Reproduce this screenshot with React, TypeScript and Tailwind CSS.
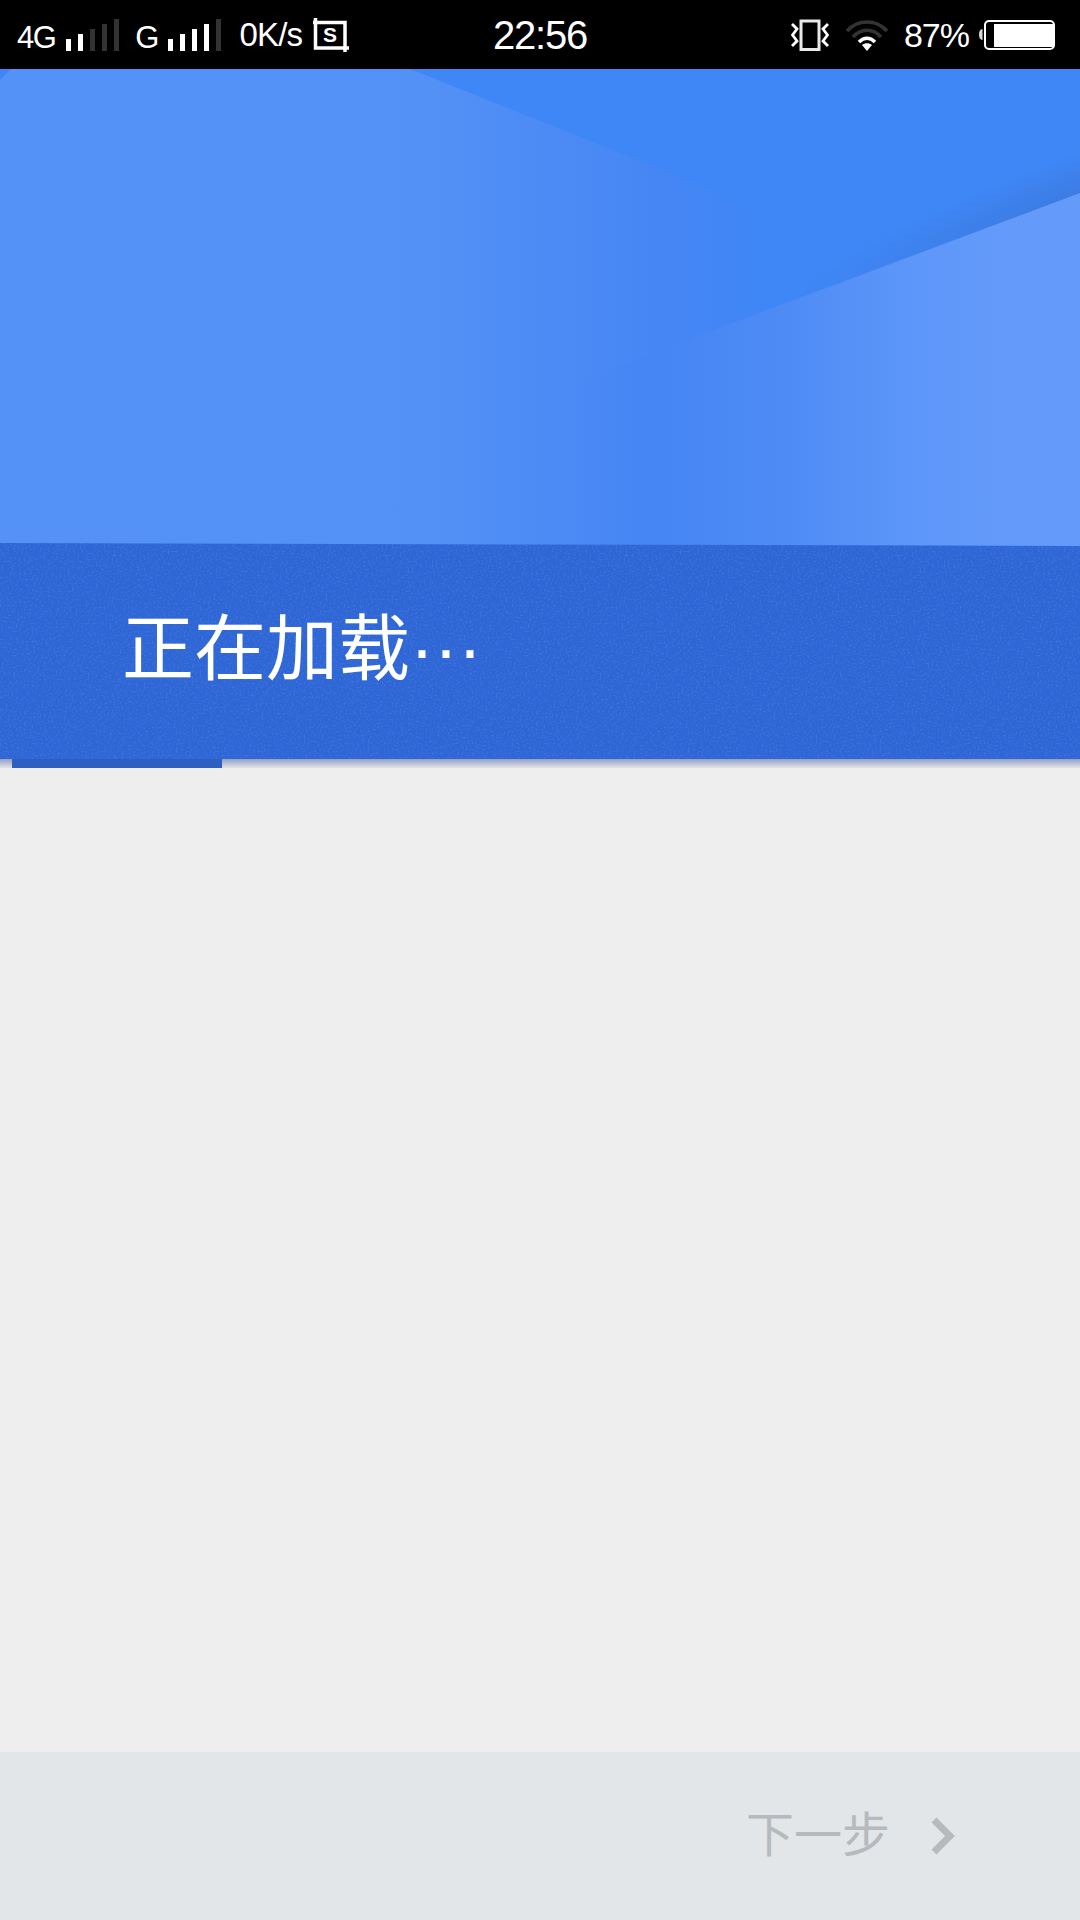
import React from 'react';

function Signal({ on }: { on: number }) {
  const bars = [12, 17, 22, 27, 32];
  return (
    <svg width="53" height="32" viewBox="0 0 53 32">
      {bars.map((h, i) => (
        <rect key={i} x={i * 12} y={32 - h} width="5" height={h} fill={i < on ? '#ffffff' : '#333333'} />
      ))}
    </svg>
  );
}

function ScreenshotIcon() {
  return (
    <svg width="39" height="34" viewBox="0 0 39 34">
      <path d="M3 4.500H35V34" fill="none" stroke="#fff" strokeWidth="3.500" />
      <path d="M5.500 0V30H39" fill="none" stroke="#fff" strokeWidth="3.500" />
      <text x="20" y="24" textAnchor="middle" fontSize="21" fontWeight="700" fill="#fff" fontFamily="Liberation Sans">S</text>
    </svg>
  );
}

function VibrateIcon() {
  return (
    <svg width="38" height="32" viewBox="0 0 38 32">
      <rect x="10" y="2" width="18" height="28.500" fill="none" stroke="#e8e8e8" strokeWidth="3" />
      <path d="M1 5l5 5-4.500 6 4.500 6-5 5" fill="none" stroke="#fff" strokeWidth="2.800" />
      <path d="M37 5l-5 5 4.500 6-4.500 6 5 5" fill="none" stroke="#fff" strokeWidth="2.800" />
    </svg>
  );
}

function WifiIcon() {
  return (
    <svg width="44" height="32" viewBox="0 0 44 32">
      <path d="M2 12C13 0 31 0 42 12" fill="none" stroke="#333" strokeWidth="3.500" />
      <path d="M8 18C16 9 28 9 36 18" fill="none" stroke="#333" strokeWidth="3.500" />
      <path d="M14 23C19 18 25 18 30 23" fill="none" stroke="#fff" strokeWidth="3.500" />
      <path d="M17 26C20 23.500 24 23.500 27 26L22 32Z" fill="#fff" />
    </svg>
  );
}

function BatteryIcon() {
  return (
    <svg width="76" height="30" viewBox="0 0 76 30">
      <path d="M3.500 9C1 9.500 0 11 0 14.500S1 19.500 3.500 20Z" fill="#d8d8d8" />
      <rect x="6" y="1" width="69" height="28" rx="4" fill="none" stroke="#fff" strokeWidth="2" />
      <rect x="15" y="4" width="59" height="23" fill="#fff" />
    </svg>
  );
}

function BannerArt() {
  return (
    <svg className="absolute inset-0 h-full w-full" viewBox="0 0 1080 477" preserveAspectRatio="none">
      <defs>
        <linearGradient id="leftFace" gradientUnits="userSpaceOnUse" x1="0" y1="0" x2="770" y2="0">
          <stop offset="0" stopColor="#5492f7" />
          <stop offset="0.55" stopColor="#5391f6" />
          <stop offset="0.86" stopColor="#4686f4" />
          <stop offset="1" stopColor="#3f86f6" />
        </linearGradient>
        <linearGradient id="rightFace" gradientUnits="userSpaceOnUse" x1="570" y1="0" x2="1000" y2="0">
          <stop offset="0" stopColor="#4686f4" stopOpacity="0" />
          <stop offset="0.22" stopColor="#4686f4" />
          <stop offset="0.5" stopColor="#4e8bf5" />
          <stop offset="0.78" stopColor="#5c96f9" />
          <stop offset="1" stopColor="#649bfa" />
        </linearGradient>
        <radialGradient id="edgeShade" gradientUnits="userSpaceOnUse" cx="0" cy="0" r="1" gradientTransform="translate(1080 128) rotate(-20.500) scale(300 42)">
          <stop offset="0" stopColor="#3a72d0" stopOpacity="0.55" />
          <stop offset="1" stopColor="#3a72d0" stopOpacity="0" />
        </radialGradient>
      </defs>
      <rect width="1080" height="477" fill="#3f86f6" />
      <polygon points="0,11 11,0 410,0 770,144 770,477 0,477" fill="url(#leftFace)" />
      <rect width="1080" height="477" fill="url(#edgeShade)" />
      <polygon points="1080,124 570,315 570,477 1080,477" fill="url(#rightFace)" />
    </svg>
  );
}

export default function App() {
  return (
    <div className="flex h-[1920px] w-[1080px] flex-col overflow-hidden bg-[#eeeeee] font-['Liberation_Sans','Noto_Sans_CJK_SC',sans-serif]">
      {/* status bar */}
      <div className="grid h-[69px] grid-cols-3 items-center bg-black text-white">
        <div className="flex items-center pl-[17px]">
          <span className="mt-[6px] text-[31px] leading-none tracking-[-1.5px]">4G</span>
          <span className="ml-[11px] flex"><Signal on={2} /></span>
          <span className="ml-4 mt-[6px] text-[31px] leading-none">G</span>
          <span className="ml-[9px] flex"><Signal on={4} /></span>
          <span className="ml-[18px] text-[33px] leading-none tracking-[-0.8px]">0K/s</span>
          <span className="ml-[8px] flex"><ScreenshotIcon /></span>
        </div>
        <div className="text-center text-[40px] leading-none tracking-[-1.2px]">22:56</div>
        <div className="flex items-center justify-end pr-[25px]">
          <VibrateIcon />
          <span className="ml-4 flex"><WifiIcon /></span>
          <span className="ml-[15px] text-[34px] leading-none tracking-[-1px]">87%</span>
          <span className="ml-[10px] flex"><BatteryIcon /></span>
        </div>
      </div>

      {/* header art */}
      <div className="relative h-[477px] shrink-0">
        <BannerArt />
      </div>

      {/* title band */}
      <div className="relative -mt-[3px] flex h-[216px] shrink-0 items-center overflow-hidden bg-[#2e66d6] pb-[5px] pl-[122px] [clip-path:polygon(0_0,100%_3px,100%_100%,0_100%)]">
        <svg className="absolute inset-0 h-full w-full opacity-[0.12]">
          <filter id="speckle">
            <feTurbulence type="fractalNoise" baseFrequency="0.5" numOctaves="2" seed="4" />
            <feColorMatrix values="0 0 0 0 1  0 0 0 0 1  0 0 0 0 1  0 0 0 2.200 -1" />
          </filter>
          <rect width="100%" height="100%" filter="url(#speckle)" />
        </svg>
        <h1 className="relative text-[72px] font-normal leading-none text-white">正在加载···</h1>
      </div>

      {/* progress + shadow */}
      <div className="relative h-[9px] shrink-0 bg-gradient-to-b from-[#93a0c0] to-[#e2e3e7]">
        <div className="absolute left-3 top-0 h-[9px] w-[210px] bg-[#2e5fc0]" />
      </div>

      <div className="flex-1" />

      {/* bottom bar */}
      <div className="flex h-[168px] shrink-0 items-center justify-end bg-[#e2e6e9] pr-[124px]">
        <span className="text-[48px] font-normal leading-none text-[#b6babd]">下一步</span>
        <svg className="ml-[40px]" width="26" height="38" viewBox="0 0 26 38">
          <path d="M4 3l16 16L4 35" fill="none" stroke="#b6babd" strokeWidth="7" />
        </svg>
      </div>
    </div>
  );
}
